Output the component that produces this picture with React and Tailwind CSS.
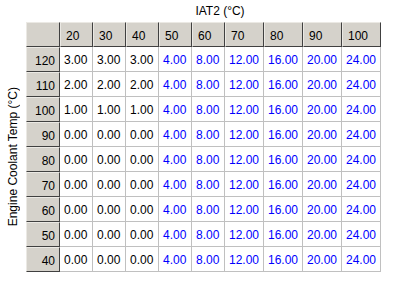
const cols = [20, 30, 40, 50, 60, 70, 80, 90, 100];
const rows = [120, 110, 100, 90, 80, 70, 60, 50, 40];
const base = [4, 8, 12, 16, 20, 24];

const rowValues = (r) => {
  const low = r === 120 ? 3 : r === 110 ? 2 : r === 100 ? 1 : 0;
  return [low, low, low, ...base];
};

const widths = ['w-[33px]', 'w-[33px]', 'w-[33px]', 'w-[33px]', 'w-[33px]', 'w-[39px]', 'w-[39px]', 'w-[39px]', 'w-[39px]'];

const HeadCell = ({ className = '', children }) => (
  <div
    className={`h-[25px] shrink-0 flex items-center pt-[2px] bg-[#d5d2cb] border-t border-l border-t-[#ebe9e4] border-l-[#ebe9e4] border-r border-b border-r-[#404040] border-b-[#404040] ${className}`}
  >
    {children}
  </div>
);

export default function App() {
  return (
    <div
      className="w-[400px] h-[290px] bg-white text-[12px] text-black leading-none"
      style={{ fontFamily: '"Liberation Sans", Arial, sans-serif' }}
    >
      <div className="h-[22px] w-[380px] pl-[60px] flex items-center justify-center pb-[1px]">
        <span>IAT2 (°C)</span>
      </div>
      <div className="flex">
        <div className="w-[26px] flex flex-col">
          <div className="h-[25px]" />
          <div className="h-[225px] flex items-center justify-center pb-[6px]">
            <span className="[writing-mode:vertical-rl] rotate-180 whitespace-nowrap leading-[14px]">
              Engine Coolant Temp (°C)
            </span>
          </div>
        </div>
        <div className="flex flex-col">
          <div className="flex">
            <HeadCell className="w-[34px]" />
            {cols.map((c, i) => (
              <HeadCell key={c} className={`${widths[i]} pl-[5px]`}>
                {c}
              </HeadCell>
            ))}
          </div>
          {rows.map((r) => (
            <div key={r} className="flex">
              <HeadCell className="w-[34px] justify-end pr-[4px]">{r}</HeadCell>
              {rowValues(r).map((v, i) => (
                <div
                  key={i}
                  className={`${widths[i]} h-[25px] shrink-0 flex items-center pt-[2px] pl-[4px] border-r border-b border-[#c0c0c0] ${
                    i >= 3 ? 'text-[#0000ff]' : 'text-black'
                  }`}
                >
                  {v.toFixed(2)}
                </div>
              ))}
            </div>
          ))}
        </div>
      </div>
    </div>
  );
}
